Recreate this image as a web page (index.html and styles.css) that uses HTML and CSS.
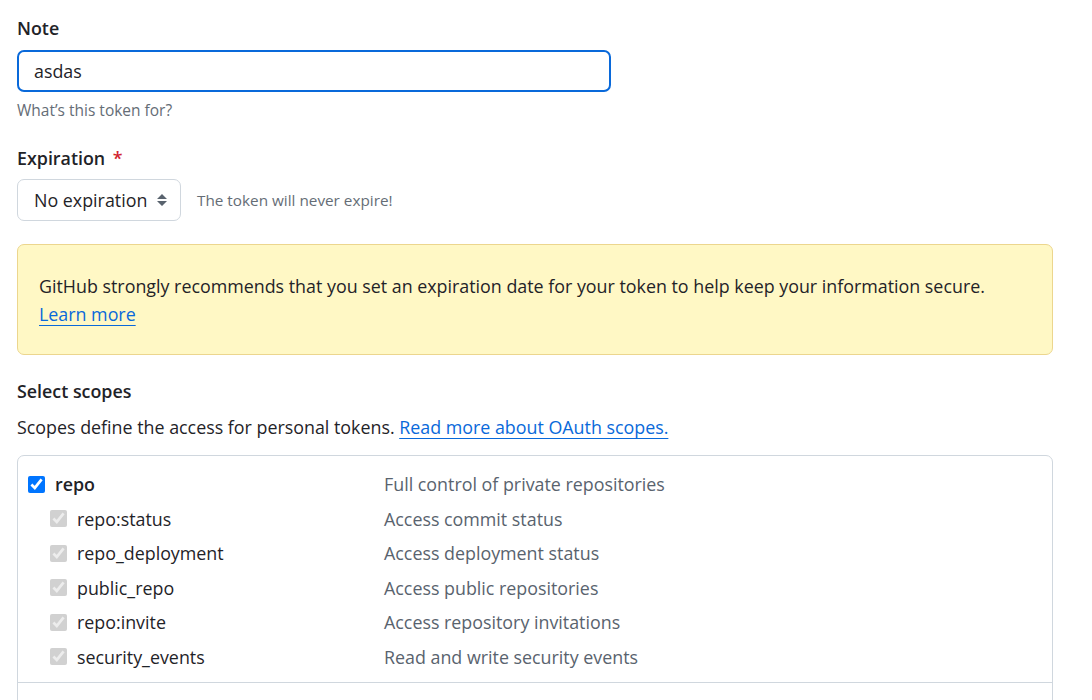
FILE: index.html
```html
<!DOCTYPE html>
<html>
<head>
<meta charset="utf-8">
<link rel="stylesheet" href="styles.css">
</head>
<body>
<div class="page">
  <div class="label">Note</div>
  <div class="text-input">asdas</div>
  <div class="hint">What’s this token for?</div>

  <div class="label label-exp">Expiration <span class="req">*</span></div>
  <div class="exp-row">
    <div class="select">No expiration
      <svg class="caret" width="12" height="14" viewBox="0 0 12 14"><path d="M6 1 L11 6 H1 Z M1 8 H11 L6 13 Z" fill="#59636e"/></svg>
    </div>
    <div class="hint-inline">The token will never expire!</div>
  </div>

  <div class="flash">
    <div>GitHub strongly recommends that you set an expiration date for your token to help keep your information secure.</div>
    <a class="link" href="#">Learn more</a>
  </div>

  <div class="label label-scopes">Select scopes</div>
  <div class="scopes-desc">Scopes define the access for personal tokens. <a class="link" href="#">Read more about OAuth scopes.</a></div>

  <div class="scopes-box">
    <div class="scope-group">
      <div class="scope-row parent">
        <label class="scope-name"><input type="checkbox" checked><span>repo</span></label>
        <span class="scope-desc">Full control of private repositories</span>
      </div>
      <div class="scope-row child">
        <label class="scope-name"><input type="checkbox" checked disabled><span>repo:status</span></label>
        <span class="scope-desc">Access commit status</span>
      </div>
      <div class="scope-row child">
        <label class="scope-name"><input type="checkbox" checked disabled><span>repo_deployment</span></label>
        <span class="scope-desc">Access deployment status</span>
      </div>
      <div class="scope-row child">
        <label class="scope-name"><input type="checkbox" checked disabled><span>public_repo</span></label>
        <span class="scope-desc">Access public repositories</span>
      </div>
      <div class="scope-row child">
        <label class="scope-name"><input type="checkbox" checked disabled><span>repo:invite</span></label>
        <span class="scope-desc">Access repository invitations</span>
      </div>
      <div class="scope-row child">
        <label class="scope-name"><input type="checkbox" checked disabled><span>security_events</span></label>
        <span class="scope-desc">Read and write security events</span>
      </div>
    </div>
    <div class="scope-group next"></div>
  </div>
</div>
</body>
</html>
```

FILE: styles.css
```css
* { box-sizing: border-box; }
html, body { margin: 0; padding: 0; background: #fff; }
body {
  font-family: "Open Sans", "Liberation Sans", sans-serif;
  font-size: 17.85px;
  color: #1f2328;
  overflow: hidden;
  height: 700px;
}
.page {
  padding: 15px 40px 0 17px;
  width: 1092px;
  height: 700px;
  overflow: hidden;
}
.label {
  font-weight: 600;
  line-height: 26px;
  height: 26px;
}
.text-input {
  margin-top: 9px;
  width: 594px;
  height: 42px;
  border: 2px solid #0969da;
  border-radius: 7px;
  padding: 0 15px;
  line-height: 38px;
}
.hint {
  margin-top: 8px;
  font-size: 15.5px;
  line-height: 20px;
  color: #656d76;
}
.label-exp { margin-top: 25px; }
.req { color: #d1242f; margin-left: 3px; }
.exp-row {
  margin-top: 8px;
  display: flex;
  align-items: center;
  gap: 16px;
}
.select {
  width: 164px;
  height: 42px;
  border: 1px solid #d0d7de;
  border-radius: 7px;
  padding: 0 12px 0 16px;
  display: flex;
  align-items: center;
  justify-content: space-between;
  line-height: 40px;
}
.caret { display: block; }
.hint-inline {
  font-size: 15.3px;
  color: #656d76;
}
.flash {
  margin-top: 23px;
  width: 1036px;
  height: 111px;
  background: #fff8c5;
  border: 1px solid #ecd68e;
  border-radius: 7px;
  padding: 27px 21px 0 21px;
  line-height: 28px;
}
.link {
  color: #0969da;
  text-decoration: underline;
  text-underline-offset: 4px;
}
.label-scopes { margin-top: 23px; }
.scopes-desc {
  margin-top: 10px;
  line-height: 26px;
}
.scopes-box {
  margin-top: 15px;
  width: 1036px;
  border: 1px solid #d0d7de;
  border-radius: 7px;
  height: 400px;
}
.scope-group {
  padding: 11px 10px 8px 10px;
  border-bottom: 1px solid #d0d7de;
}
.scope-group.next { border-bottom: 0; }
.scope-row {
  display: flex;
  align-items: center;
  height: 34.5px;
}
.scope-name {
  display: flex;
  align-items: center;
  width: 356px;
}
.scope-row.child .scope-name { padding-left: 22px; width: 356px; }
.scope-name input {
  width: 17px;
  height: 17px;
  margin: 0 10px 0 0;
}
.parent .scope-name span { font-weight: 600; }
.scope-desc { color: #59636e; }
```
